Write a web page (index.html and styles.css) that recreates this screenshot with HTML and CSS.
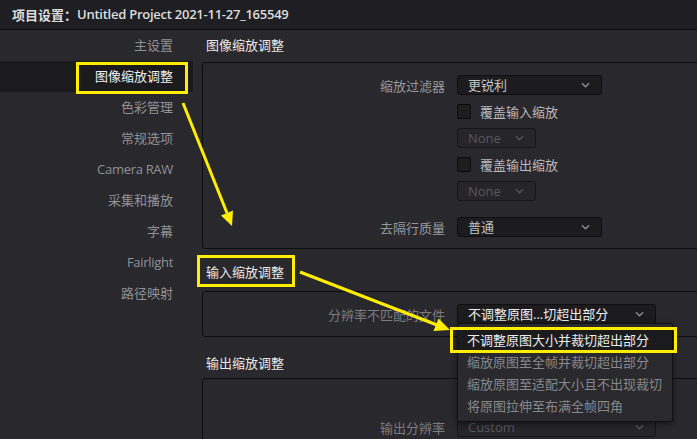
FILE: index.html
```html
<!DOCTYPE html>
<html lang="zh-CN">
<head>
<meta charset="utf-8">
<title>项目设置</title>
<link rel="stylesheet" href="styles.css">
</head>
<body>
<div class="window">
  <header class="titlebar">项目设置：<span class="title-latin">Untitled Project 2021-11-27_165549</span></header>
  <div class="layout">
    <nav class="sidebar">
      <div class="nav-item">主设置</div>
      <div class="nav-item active">图像缩放调整</div>
      <div class="nav-item">色彩管理</div>
      <div class="nav-item">常规选项</div>
      <div class="nav-item latin">Camera RAW</div>
      <div class="nav-item">采集和播放</div>
      <div class="nav-item">字幕</div>
      <div class="nav-item latin">Fairlight</div>
      <div class="nav-item">路径映射</div>
    </nav>
    <main class="content">
      <h2 class="sec-title first">图像缩放调整</h2>
      <section class="panel panel-scale">
        <div class="row">
          <span class="label">缩放过滤器</span>
          <div class="select w-md"><span class="val">更锐利</span><svg class="chev" viewBox="0 0 10 6"><polyline points="1,1 5,5 9,1"/></svg></div>
        </div>
        <div class="row tall">
          <span class="label"></span>
          <div class="check"><span class="box"></span><span>覆盖输入缩放</span></div>
        </div>
        <div class="row">
          <span class="label"></span>
          <div class="select w-sm disabled"><span class="val">None</span><svg class="chev" viewBox="0 0 10 6"><polyline points="1,1 5,5 9,1"/></svg></div>
        </div>
        <div class="row tall">
          <span class="label"></span>
          <div class="check"><span class="box"></span><span>覆盖输出缩放</span></div>
        </div>
        <div class="row">
          <span class="label"></span>
          <div class="select w-sm disabled"><span class="val">None</span><svg class="chev" viewBox="0 0 10 6"><polyline points="1,1 5,5 9,1"/></svg></div>
        </div>
        <div class="row spaced">
          <span class="label">去隔行质量</span>
          <div class="select w-md"><span class="val">普通</span><svg class="chev" viewBox="0 0 10 6"><polyline points="1,1 5,5 9,1"/></svg></div>
        </div>
      </section>

      <h2 class="sec-title second">输入缩放调整</h2>
      <section class="panel panel-input">
        <div class="row">
          <span class="label dim">分辨率不匹配的文件</span>
          <div class="select w-lg"><span class="val bright">不调整原图...切超出部分</span><svg class="chev" viewBox="0 0 10 6"><polyline points="1,1 5,5 9,1"/></svg></div>
        </div>
      </section>

      <h2 class="sec-title third">输出缩放调整</h2>
      <section class="panel panel-output">
        <div class="row">
          <span class="label dim">输出分辨率</span>
          <div class="select w-lg disabled"><span class="val">Custom</span><svg class="chev" viewBox="0 0 10 6"><polyline points="1,1 5,5 9,1"/></svg></div>
        </div>
      </section>
    </main>
  </div>

  <ul class="menu">
    <li class="menu-item current">不调整原图大小并裁切超出部分</li>
    <li class="menu-item">缩放原图至全帧并裁切超出部分</li>
    <li class="menu-item">缩放原图至适配大小且不出现裁切</li>
    <li class="menu-item">将原图拉伸至布满全帧四角</li>
  </ul>

  <div class="mark mark-nav"></div>
  <div class="mark mark-sec"></div>
  <div class="mark mark-item"></div>

  <svg class="arrows" viewBox="0 0 697 439" width="697" height="439">
    <line x1="183" y1="103" x2="227" y2="213"/>
    <polygon points="232,226 221,215.5 233,210.5"/>
    <line x1="300" y1="272" x2="437" y2="325"/>
    <polygon points="450,330 433.5,331 438.5,318.5"/>
  </svg>
</div>
</body>
</html>
```

FILE: styles.css
```css
* { box-sizing: border-box; }

html, body {
  margin: 0;
  padding: 0;
  background: #28282d;
}

body {
  font-family: "Open Sans", "Noto Sans CJK SC", sans-serif;
  font-size: 13px;
  color: #9a9a9e;
}

.window {
  position: relative;
  width: 697px;
  height: 439px;
  overflow: hidden;
  background: #28282d;
}

.titlebar {
  height: 30px;
  padding-left: 12px;
  display: flex;
  align-items: center;
  background: #1f1f23;
  border-bottom: 1px solid #0b0b0d;
  color: #dcdcdc;
  font-weight: 600;
  font-size: 13px;
  padding-bottom: 1px;
  white-space: nowrap;
}

.title-latin {
  letter-spacing: -0.25px;
}

.layout {
  display: flex;
}

.sidebar {
  width: 193px;
  flex: none;
  display: flex;
  flex-direction: column;
}

.nav-item {
  height: 31px;
  line-height: 31px;
  text-align: right;
  padding-right: 20px;
  color: #929296;
  white-space: nowrap;
}

.nav-item.latin {
  letter-spacing: -0.3px;
}

.nav-item.active {
  background: #1b1b1e;
  color: #f0f0f0;
}

.content {
  flex: 1;
  padding-left: 9px;
  margin-right: -20px;
}

.sec-title {
  margin: 0;
  font-size: 13px;
  font-weight: normal;
  color: #e8e8e8;
  padding-left: 4px;
  line-height: 18px;
}

.sec-title.first { height: 32px; padding-top: 6px; }
.sec-title.second { height: 42px; padding-top: 14px; }
.sec-title.third { height: 41px; padding-top: 17px; }

.panel {
  border: 1px solid #0d0d0f;
  border-radius: 3px;
  display: flex;
  flex-direction: column;
  gap: 6px;
}

.panel-scale { height: 187px; padding-top: 12px; }
.panel-input { height: 46px; padding-top: 12px; }
.panel-output { height: 80px; padding-top: 38px; }

.row {
  display: grid;
  grid-template-columns: 242px auto;
  column-gap: 12px;
  align-items: center;
  height: 20px;
}

.row.tall { height: 21px; }
.row.spaced { margin-top: 10px; }

.label {
  text-align: right;
  color: #98989c;
  white-space: nowrap;
}

.label.dim { color: #7c7c80; }

.select {
  height: 20px;
  display: flex;
  align-items: center;
  justify-content: space-between;
  padding: 0 11px 0 10px;
  background: #1c1c1f;
  border: 1px solid #0e0e10;
  border-radius: 3px;
  color: #c4c4c4;
}

.select .val { white-space: nowrap; line-height: 18px; }
.select .val.bright { color: #ececec; }

.select.disabled {
  background: #25252a;
  border-color: #161619;
  color: #58585d;
}

.w-sm { width: 79px; }
.w-md { width: 145px; }
.w-lg { width: 199px; }

.chev {
  width: 9px;
  height: 6px;
  fill: none;
  stroke: #8c8c90;
  stroke-width: 1.6;
}

.select.disabled .chev { stroke: #55555a; }

.check {
  display: flex;
  align-items: center;
  gap: 9px;
  color: #b9b9bc;
}

.check .box {
  width: 14px;
  height: 15px;
  background: #1d1d20;
  border: 1px solid #0b0b0d;
  border-radius: 2px;
}

.menu {
  position: absolute;
  left: 457px;
  top: 323px;
  width: 216px;
  height: 99px;
  margin: 0;
  padding: 5px 0 0;
  list-style: none;
  background: #2a2a2e;
  border: 1px solid #101013;
  border-radius: 2px;
  box-shadow: 0 2px 6px rgba(0, 0, 0, 0.45);
}

.menu-item {
  height: 22px;
  line-height: 22px;
  padding-left: 9px;
  color: #88888c;
  white-space: nowrap;
}

.menu-item.current {
  background: #1b1b1e;
  color: #ececec;
}

.mark {
  position: absolute;
  border: 3px solid #ffee00;
}

.mark-nav { left: 76px; top: 62px; width: 112px; height: 32px; }
.mark-sec { left: 197px; top: 255px; width: 98px; height: 32px; }
.mark-item { left: 450px; top: 327px; width: 227px; height: 26px; }

.arrows {
  position: absolute;
  left: 0;
  top: 0;
  pointer-events: none;
}

.arrows line {
  stroke: #ffee00;
  stroke-width: 3;
}

.arrows polygon {
  fill: #ffee00;
}
```
